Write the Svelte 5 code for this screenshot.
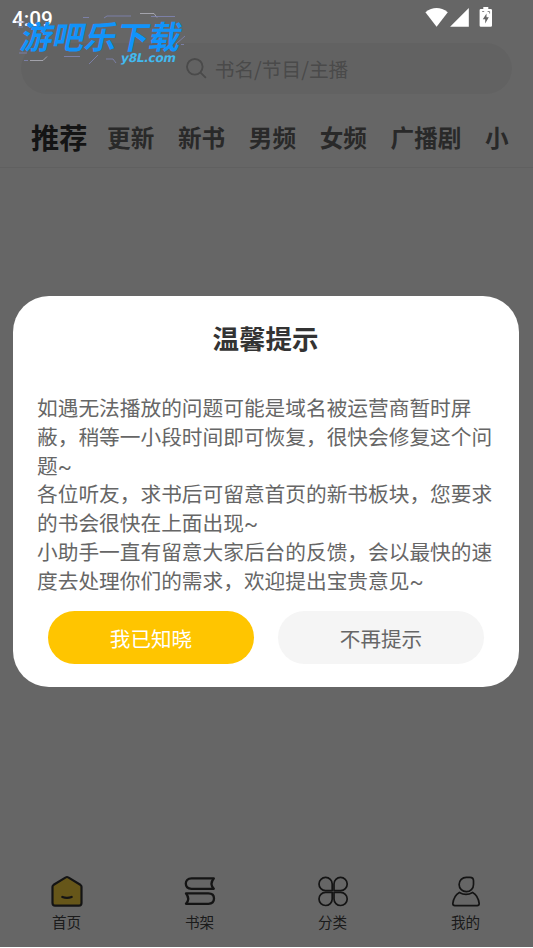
<script>
    let tabs = ["推荐", "更新", "新书", "男频", "女频", "广播剧", "小"];
    let current = "推荐";
    let navs = [
        { name: "home", label: "首页" },
        { name: "shelf", label: "书架" },
        { name: "sort", label: "分类" },
        { name: "mine", label: "我的" },
    ];
    let notices = [
        "如遇无法播放的问题可能是域名被运营商暂时屏蔽，稍等一小段时间即可恢复，很快会修复这个问题~",
        "各位听友，求书后可留意首页的新书板块，您要求的书会很快在上面出现~",
        "小助手一直有留意大家后台的反馈，会以最快的速度去处理你们的需求，欢迎提出宝贵意见~",
    ];
    let showNotice = true;

    function hideNotice() {
        showNotice = false;
    }
</script>

<main>
    <div class="search">
        <svg width="21" height="22" viewBox="0 0 21 22" fill="none" stroke="#b8b8b8" stroke-width="1.9">
            <circle cx="8.8" cy="8.8" r="7.8" />
            <path d="M14.3 14.3l5.6 5.6" />
        </svg>
        <span>书名/节目/主播</span>
    </div>

    <div class="tabs">
        {#each tabs as tab}
            <span class="tab" class:active={tab === current}>{tab}</span>
        {/each}
    </div>

    <div class="content"></div>

    <nav>
        {#each navs as { name, label }}
            <div class="item">
                <svg width="34" height="34" viewBox="0 0 34 34" fill="none" stroke="#333" stroke-width="1.7" stroke-linejoin="round" stroke-linecap="round">
                    {#if name === "home"}
                        <path d="M15.8 3.4Q17 2.6 18.2 3.4L30.3 10.8Q31.5 11.6 31.5 12.8V29Q31.5 31.6 29 31.6H5Q2.5 31.6 2.5 29V12.8Q2.5 11.6 3.7 10.8Z" fill="#ffd640" stroke-width="2.2" />
                        <path d="M12.4 23Q17 24.8 21.6 23" stroke-width="2.4" />
                    {:else if name === "shelf"}
                        <path d="M30.8 4.4H8.5C4.5 4.4 2.8 6.8 2.8 9.6S4.5 14.8 8.5 14.8H30.8Q26.2 9.6 30.8 4.4Z" stroke-width="2.3" />
                        <path d="M3 19.4H25.4C29.3 19.4 31 21.8 31 24.6S29.3 29.8 25.4 29.8H3Q7.4 24.6 3 19.4Z" stroke-width="2.3" />
                    {:else if name === "sort"}
                        <path d="M16.2 16.6H9.5A6.6 6.6 0 1 1 16.2 10Z" />
                        <path d="M18 16.6V10A6.6 6.6 0 1 1 24.7 16.6Z" />
                        <path d="M16.2 18.3V24.9A6.6 6.6 0 1 1 9.5 18.3Z" />
                        <path d="M18 18.3H24.7A6.6 6.6 0 1 1 18 24.9Z" />
                    {:else}
                        <path d="M17.3 3.3H21Q24.5 3.3 24.5 6.8V10.4A7.2 7.2 0 1 1 17.3 3.3Z" />
                        <path d="M10.4 18.4Q17 22.4 23.6 18.4C27.2 20.4 29.6 24.5 30.2 29.6Q30.2 31.6 28.2 31.6H5.8Q3.8 31.6 3.8 29.6C4.4 24.5 6.8 20.4 10.4 18.4Z" />
                    {/if}
                </svg>
                <span>{label}</span>
            </div>
        {/each}
    </nav>
</main>

{#if showNotice}
    <div class="mask">
        <div class="dialog">
            <h2>温馨提示</h2>
            <div class="text">
                {#each notices as notice}
                    <p>{notice}</p>
                {/each}
            </div>
            <div class="buttons">
                <button class="ok" on:click={hideNotice}>我已知晓</button>
                <button on:click={hideNotice}>不再提示</button>
            </div>
        </div>
    </div>
{/if}

<div class="status">
    <span>4:09</span>
    <svg width="68" height="22" viewBox="0 0 68 22" fill="#fff">
        <path d="M0.4 5.2Q11.5-3 22.8 5.2L11.6 19.7Z" />
        <path d="M43.8 1V19.7H25.1Z" />
        <path d="M58.3 0h5v2h2.4q1.3 0 1.3 1.3v15.1q0 1.3-1.3 1.3h-9.8q-1.3 0-1.3-1.3V3.3Q54.6 2 55.9 2h2.4Z" />
        <path d="M61.5 6.5L57.8 12.3H60.2V16.5L63.8 10.3H61.5Z" fill="#666" />
        <path d="M57.2 4.5h2M62.6 4.5h2v2" fill="none" stroke="#888" />
    </svg>
</div>

<div class="logo">
    <svg width="190" height="70" viewBox="0 0 190 70" fill="none" stroke="#8286b8" stroke-width="0.8">
        <path d="M104 18l3-2h24M83 17.5h6" />
        <path d="M140 13.5h14l3 4" stroke="#b3b3bd" />
        <path d="M151 16.5h24M16 22h9M18 27h5" />
        <path d="M30 60.5h13l4-4" stroke="#b3b3bd" />
        <path d="M64 56.5h16M89 64l9-9M106 59h7l3 4" />
        <path d="M176 44l9-8M181 44.5h3M19 53h8M24 60.5h4" />
    </svg>
    <span class="name">游吧乐下载</span>
    <span class="site">y8L.com</span>
</div>

<style>
    :global(body) {
        background: #fff;
        font-family: "Noto Sans CJK SC", sans-serif;
        overflow: hidden;
    }
    main {
        display: flex;
        flex-direction: column;
        box-sizing: border-box;
        width: 533px;
        height: 946.5px;
        padding-top: 43px;
        background: #fff;
    }
    .search {
        display: flex;
        align-items: center;
        justify-content: center;
        gap: 8px;
        height: 51px;
        margin: 0 21px;
        padding-left: 1px;
        border-radius: 26px;
        background: #f6f6f6;
        color: #b8b8b8;
        font-size: 19.7px;
    }
    .tabs {
        display: flex;
        align-items: center;
        gap: 23.7px;
        height: 74px;
        padding: 12px 0 0 31px;
        box-sizing: border-box;
        border-bottom: 1px solid #efefef;
        white-space: nowrap;
        overflow: hidden;
        color: #666;
        font-size: 23.6px;
        font-weight: 600;
        line-height: 40px;
    }
    .active {
        margin-right: -4px;
        color: #333;
        font-size: 28.2px;
    }
    .content {
        flex: 1;
    }
    nav {
        display: flex;
        width: 532px;
        height: 73px;
    }
    .item {
        flex: 1;
        display: flex;
        flex-direction: column;
        align-items: center;
        color: #444;
        font-size: 14.6px;
        line-height: 22px;
    }
    .item span {
        margin-top: 3px;
    }
    .mask {
        position: absolute;
        top: 0;
        left: 0;
        width: 533px;
        height: 946.5px;
        background: rgba(0, 0, 0, 0.6);
    }
    .dialog {
        box-sizing: border-box;
        width: 506px;
        height: 391px;
        margin: 296px 0 0 13px;
        padding: 22px 24px 0;
        border-radius: 36px;
        background: #fff;
    }
    h2 {
        margin: 0 1px 0 0;
        color: #333;
        font-size: 26.5px;
        font-weight: 600;
        line-height: 40px;
        text-align: center;
    }
    .text {
        margin-top: 37px;
        color: #666;
        font-family: Roboto, "Noto Sans CJK SC", sans-serif;
        font-size: 20.7px;
        line-height: 28.75px;
    }
    p {
        margin: 0;
    }
    .buttons {
        display: flex;
        gap: 24px;
        margin: 15px 11px 0;
    }
    button {
        flex: 1;
        height: 52.5px;
        padding: 1px 0 0;
        border: none;
        border-radius: 27px;
        background: #f5f5f5;
        color: #666;
        font-family: inherit;
        font-size: 20.6px;
    }
    .ok {
        background: #ffc500;
        color: #fff;
    }
    .status {
        position: absolute;
        top: 7px;
        left: 12px;
        width: 481px;
        display: flex;
        justify-content: space-between;
        color: #fff;
        font-family: Roboto, sans-serif;
        font-size: 20.8px;
        font-weight: 500;
        line-height: 24px;
    }
    /* watermark over the status bar */
    .logo {
        position: absolute;
        top: 0;
        left: 0;
    }
    .name,
    .site {
        position: absolute;
        white-space: nowrap;
        font-weight: 700;
        transform: skewX(-12deg);
    }
    .name {
        top: 11px;
        left: 22px;
        color: #1193fb;
        font-size: 32px;
        line-height: 48px;
    }
    .site {
        top: 50px;
        left: 121px;
        color: #42b9ef;
        font-family: "DejaVu Sans", sans-serif;
        font-size: 12px;
        line-height: 17px;
        letter-spacing: -0.2px;
    }
</style>
